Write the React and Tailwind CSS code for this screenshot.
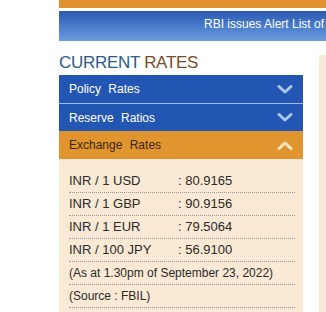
import React from "react";

const Chevron = ({ up, color }) => (
  <svg width="16" height="9" viewBox="0 0 16 9" className="shrink-0">
    <polyline
      points={up ? "2,7.5 8,2 14,7.5" : "2,1.5 8,7 14,1.5"}
      fill="none"
      stroke={color}
      strokeWidth="3"
      strokeLinecap="round"
      strokeLinejoin="round"
    />
  </svg>
);

const rates = [
  ["INR / 1 USD", "80.9165"],
  ["INR / 1 GBP", "90.9156"],
  ["INR / 1 EUR", "79.5064"],
  ["INR / 100 JPY", "56.9100"],
];

export default function App() {
  return (
    <div
      className="w-[326px] h-[312px] overflow-hidden bg-white pl-[59px] flex flex-col"
      style={{ fontFamily: '"Liberation Sans", Arial, sans-serif' }}
    >
      <div className="h-[8px] bg-[#e1922e] shrink-0" />
      <div className="mt-[3px] h-[30px] shrink-0 bg-gradient-to-b from-[#2a5ab3] to-[#6b9de0] flex items-center pl-[145px] pb-[4px] overflow-hidden">
        <span className="text-[12px] text-white whitespace-nowrap leading-none">
          RBI issues Alert List of
        </span>
      </div>
      <div className="mt-[12px] flex flex-1 min-h-0">
        <div className="w-[244px] shrink-0 flex flex-col">
          <h2 className="text-[17px] leading-[20px] tracking-[-0.3px] mb-[2px] whitespace-nowrap">
            <span className="text-[#2e5a86]">CURRENT </span>
            <span className="text-[#7a4a2b]">RATES</span>
          </h2>
          <div className="flex flex-col flex-1 bg-[#fae9d4]">
            <div className="h-[28px] bg-[#2356b3] flex items-center justify-between pl-[10px] pr-[10px]">
              <span className="text-[12px] text-white [word-spacing:4px]">Policy Rates</span>
              <Chevron color="#a9c8f0" />
            </div>
            <div className="h-[1px] bg-[#9fbde8]" />
            <div className="h-[27px] bg-[#2356b3] flex items-center justify-between pl-[10px] pr-[10px]">
              <span className="text-[12px] text-white [word-spacing:4px]">Reserve Ratios</span>
              <Chevron color="#a9c8f0" />
            </div>
            <div className="h-[28px] bg-[#e0952f] flex items-center justify-between pl-[10px] pr-[10px]">
              <span className="text-[12px] text-[#3a2612] [word-spacing:4px]">Exchange Rates</span>
              <Chevron up color="#fde7c2" />
            </div>
            <div className="pt-[11px] pl-[10px] pr-[8px] flex flex-col">
              {rates.map(([l, v]) => (
                <div
                  key={l}
                  className="h-[23px] flex items-center border-b border-dotted border-[#9a9a9a] text-[13px] text-[#2a2a2a]"
                >
                  <span className="w-[109px] shrink-0">{l}</span>
                  <span>: {v}</span>
                </div>
              ))}
              <div className="h-[23px] flex items-center border-b border-dotted border-[#9a9a9a] text-[12px] text-[#2a2a2a] whitespace-nowrap">
                (As at 1.30pm of September 23, 2022)
              </div>
              <div className="h-[23px] flex items-center border-b border-dotted border-[#9a9a9a] text-[12px] text-[#2a2a2a]">
                (Source : FBIL)
              </div>
            </div>
          </div>
        </div>
        <div className="w-[16px] shrink-0" />
        <div className="flex-1 mt-[2px] bg-[#f8ead8]" />
      </div>
    </div>
  );
}
